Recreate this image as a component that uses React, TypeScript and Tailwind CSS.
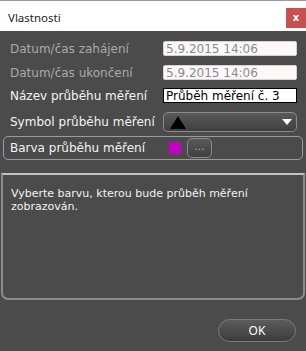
import React from 'react';

const dejavu = { fontFamily: '"DejaVu Sans", sans-serif' };

function Row({ label, dim, children }: { label: string; dim?: boolean; children: React.ReactNode }) {
  return (
    <div className="flex items-center pl-[10px]">
      <span className={`w-[153px] text-[12px] leading-none ${dim ? 'text-[#a9a9a9]' : 'text-[#f4f4f4]'}`}>{label}</span>
      {children}
    </div>
  );
}

export default function App() {
  return (
    <div className="flex h-[351px] w-[306px] flex-col bg-[#4b4b4b]" style={dejavu}>
      {/* title bar */}
      <div className="flex h-[31px] shrink-0 items-start justify-between border-t border-[#9a9a9a] bg-white">
        <span
          className="mt-[8px] pl-[8px] text-[11.5px] text-[#222]"
          style={{ fontFamily: '"Noto Sans", sans-serif' }}
        >
          Vlastnosti
        </span>
        <button className="mt-[7px] flex h-[20px] w-[20px] items-center justify-center bg-[#c75050] text-[10px] font-bold leading-none text-white">
          x
        </button>
      </div>

      <div className="flex flex-col pt-[10px]">
        <Row label="Datum/čas zahájení" dim>
          <div className="flex h-[15px] w-[134px] items-center rounded-[2px] border border-[#d8d0d0] bg-[#fff8f8] pl-[2px] text-[12px] text-[#7f8c9a]">
            5.9.2015 14:06
          </div>
        </Row>
        <div className="h-[9px]" />
        <Row label="Datum/čas ukončení" dim>
          <div className="flex h-[15px] w-[134px] items-center rounded-[2px] border border-[#d8d0d0] bg-[#fff8f8] pl-[2px] text-[12px] text-[#7f8c9a]">
            5.9.2015 14:06
          </div>
        </Row>
        <div className="h-[8px]" />
        <Row label="Název průběhu měření">
          <div className="flex h-[15px] w-[134px] items-center border border-black bg-white pl-[2px] text-[12px] text-black">
            Průběh měření č. 3
          </div>
        </Row>
        <div className="h-[9px]" />
        <Row label="Symbol průběhu měření">
          <div className="flex h-[20px] w-[134px] items-center justify-between rounded-[5px] border border-[#8a8a8a] bg-gradient-to-b from-[#5a5a5a] to-[#3f3f3f] pl-[6px] pr-[4px]">
            <svg width="16" height="13" viewBox="0 0 16 13">
              <polygon points="8,0 16,13 0,13" fill="#000" />
            </svg>
            <svg width="10" height="6" viewBox="0 0 10 6">
              <polygon points="0,0 10,0 5,6" fill="#fff" />
            </svg>
          </div>
        </Row>
        <div className="h-[4px]" />
        <div className="mx-[3px] flex h-[24px] items-center rounded-[5px] border border-[#9c9c9c] pl-[6px]">
          <span className="w-[159px] text-[12px] leading-none text-[#f4f4f4]">Barva průběhu měření</span>
          <div className="h-[12px] w-[12px] bg-[#c400c4]" />
          <button className="ml-[6px] flex h-[20px] w-[25px] items-center justify-center rounded-[5px] border border-[#8a8a8a] bg-gradient-to-b from-[#5a5a5a] to-[#3f3f3f] pb-[3px] text-[11px] leading-none text-[#d6a46c]">
            ...
          </button>
        </div>

        <div className="mx-[1px] mt-[13px] h-[127px] rounded-b-[7px] border-2 border-[#8c8c8c] border-t-[#c4c4c4] px-[8px] pt-[12px] text-[11px] leading-[13px] text-[#f2f2f2]">
          Vyberte barvu, kterou bude průběh měření zobrazován.
          <span className="sr-only" />
        </div>

        <div className="flex justify-end pr-[10px] pt-[19px]">
          <button
            className="flex h-[23px] w-[78px] items-center justify-center rounded-full border border-[#7a7a7a] bg-gradient-to-b from-[#5c5c5c] to-[#3c3c3c] text-[12px] text-white"
            style={{ fontFamily: '"Noto Sans", sans-serif' }}
          >
            OK
          </button>
        </div>
      </div>
    </div>
  );
}
